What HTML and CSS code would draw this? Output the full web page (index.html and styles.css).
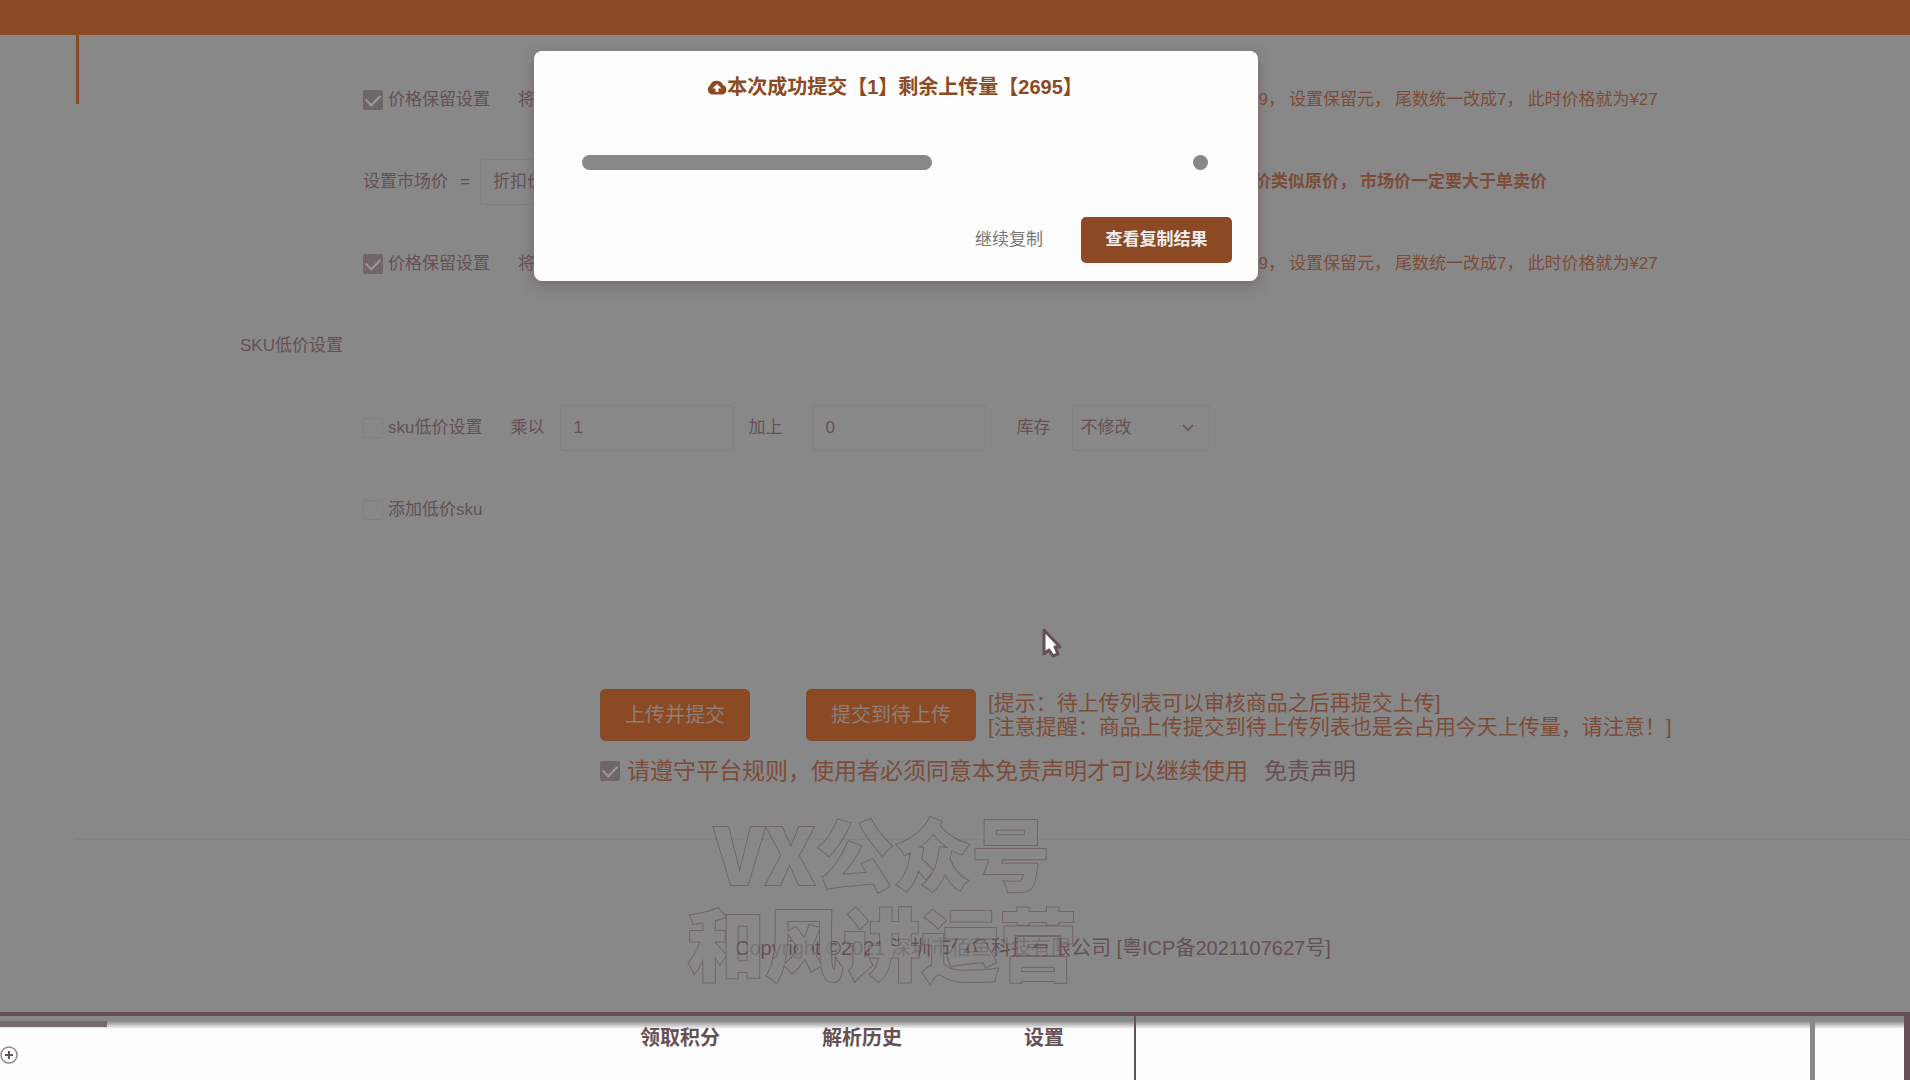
FILE: index.html
```html
<!DOCTYPE html>
<html lang="zh-CN">
<head>
<meta charset="utf-8">
<title>商品复制上传</title>
<link rel="stylesheet" href="styles.css">
</head>
<body>
<div class="page">
  <header class="topbar"></header>
  <main class="content">
    <form class="panel">
      <div class="row">
        <label class="check"><input type="checkbox" checked>价格保留设置</label>
        <span class="lead">将</span>
        <span class="hint hint-price"><span>59，</span><span>设置保留元，</span><span>尾数统一改成7，</span><span>此时价格就为¥27</span></span>
      </div>
      <div class="row">
        <label for="market">设置市场价</label>
        <span class="equals">=</span>
        <select id="market" class="field market"><option>折扣价</option></select>
        <span class="hint hint-market"><span>价类似原价，</span><span>市场价一定要大于单卖价</span></span>
      </div>
      <div class="row">
        <label class="check"><input type="checkbox" checked>价格保留设置</label>
        <span class="lead">将</span>
        <span class="hint hint-price"><span>59，</span><span>设置保留元，</span><span>尾数统一改成7，</span><span>此时价格就为¥27</span></span>
      </div>
      <div class="row row-title">SKU低价设置</div>
      <div class="row">
        <label class="check"><input type="checkbox">sku低价设置</label>
        <label class="tag" for="times">乘以</label>
        <input id="times" class="field" type="text" value="1">
        <label class="tag-near" for="plus">加上</label>
        <input id="plus" class="field" type="text" value="0">
        <label class="tag-stock" for="stock">库存</label>
        <span class="select-wrap">
          <select id="stock" class="field stock"><option>不修改</option></select>
          <svg class="chevron" viewBox="0 0 12 8"><path d="M1 1l5 5 5-5" fill="none" stroke="currentColor" stroke-width="1.6"/></svg>
        </span>
      </div>
      <div class="row">
        <label class="check"><input type="checkbox">添加低价sku</label>
      </div>
      <div class="actions">
        <button type="button" class="btn">上传并提交</button>
        <button type="button" class="btn">提交到待上传</button>
        <p class="tips">[提示：待上传列表可以审核商品之后再提交上传]<br>[注意提醒：商品上传提交到待上传列表也是会占用今天上传量，请注意！]</p>
      </div>
      <div class="agree">
        <label class="check"><input type="checkbox" checked>请遵守平台规则，使用者必须同意本免责声明才可以继续使用</label>
        <a href="#">免责声明</a>
      </div>
    </form>
    <footer class="footer">
      <p class="copyright">Copyright ©2021 深圳市佰鱼科技有限公司 [粤ICP备2021107627号]</p>
      <div class="watermark"><span>VX公众号</span><span>和风讲运营</span></div>
    </footer>
  </main>
  <nav class="dock">
    <div class="dock-main">
      <svg class="plus" viewBox="0 0 18 18"><circle cx="9" cy="9" r="8" fill="none" stroke="#888" stroke-width="1.4"/><path d="M9 5v8M5 9h8" stroke="#655054" stroke-width="2"/></svg>
      <a href="#">领取积分</a><a href="#">解析历史</a><a href="#">设置</a>
    </div>
    <div class="dock-mid"></div>
    <div class="dock-end"></div>
  </nav>
  <section class="modal" role="dialog" aria-labelledby="modal-title">
    <h2 id="modal-title"><svg class="cloud" viewBox="0 0 20 16"><path fill="currentColor" fill-rule="evenodd" d="M5 15.500A5 5 0 0 1 3 6.500 7 7 0 0 1 16 6a5 5 0 0 1 0 9.500ZM10 5L5.500 9.500H8.500V13H11.500V9.500H14.500Z"/></svg>本次成功提交【1】剩余上传量【2695】</h2>
    <div class="progress"><span class="bar"></span><span class="dot"></span></div>
    <div class="modal-actions">
      <button type="button" class="plain">继续复制</button>
      <button type="button" class="primary">查看复制结果</button>
    </div>
  </section>
  <svg class="cursor" viewBox="0 0 20 30"><path d="M2 2v24l5-4 4 6 5-2-3-7h5Z" fill="#fdfdfd" stroke="#655054" stroke-width="3" stroke-linejoin="round"/></svg>
</div>
</body>
</html>
```
FILE: styles.css
```css
:root {
  --grey: #888;
  --ink: #655054;
  --rust: #8c4a24;
  --hint: #7c4c38;
  --faint: #7c7879;
}
* { box-sizing: border-box; }
body {
  margin: 0;
  background: var(--grey);
  color: var(--ink);
  font: 17px/24px "Liberation Sans", "Noto Sans CJK SC", sans-serif;
}
h2, p { margin: 0; }
a { color: inherit; text-decoration: none; }
button, input, select { font: inherit; color: inherit; margin: 0; }
.page {
  position: relative;
  display: flex;
  flex-direction: column;
  min-height: 100vh;
  overflow: hidden;
}
.topbar { height: 35px; background: var(--rust); }
.content { flex: 1; padding-left: 76px; }
.panel {
  padding: 24px 0 56px 161px;
  border-left: 3px solid;
  border-image: linear-gradient(var(--rust) 70px, transparent 70px) 1;
}
.row {
  display: flex;
  align-items: center;
  height: 82px;
  padding-left: 123px;
  white-space: nowrap;
}
.row-title { padding-left: 0; }
.check { display: flex; align-items: center; gap: 5px; }
input[type="checkbox"] {
  appearance: none;
  display: grid;
  place-items: center;
  width: 20px;
  height: 20px;
  border: 1px dotted var(--faint);
  border-radius: 2px;
}
input[type="checkbox"]:checked { background: #70666a; border: 1px solid #70666a; }
input[type="checkbox"]:checked::before {
  content: "";
  width: 12px;
  height: 7px;
  margin-bottom: 3px;
  border: solid #999;
  border-width: 0 0 2px 2px;
  rotate: -45deg;
}
.lead { margin-left: 28px; }
.hint { display: flex; gap: 4px; color: var(--hint); }
.hint-price { margin-left: 714px; }
.hint-market { margin-left: 674px; font-weight: bold; }
.equals { margin: 0 10px 0 12px; }
.field {
  appearance: none;
  width: 174px;
  height: 46px;
  padding: 0 12px;
  border: 1px dotted var(--faint);
  border-radius: 4px;
  background: transparent;
}
.market { width: 100px; }
.tag { margin: 0 16px 0 28px; }
.tag-near { margin: 0 30px 0 14px; }
.tag-stock { margin: 0 22px 0 30px; }
.select-wrap { position: relative; }
.stock { width: 138px; padding: 0 7px; }
.chevron { position: absolute; right: 16px; top: 19px; width: 12px; height: 8px; }
.actions { display: flex; align-items: center; margin-top: 138px; padding-left: 360px; white-space: nowrap; }
.btn {
  height: 52px;
  padding: 0 24px;
  border: 1px solid #7c4c38;
  border-radius: 5px;
  background: var(--rust);
  color: #8b7f78;
  font-size: 20px;
}
.btn + .btn { margin-left: 56px; }
.tips { margin-left: 12px; color: var(--hint); font-size: 21px; }
.agree { display: flex; gap: 16px; margin-top: 18px; padding-left: 360px; font-size: 23px; white-space: nowrap; }
.agree .check { gap: 7px; color: var(--hint); }
.footer {
  position: relative;
  height: 170px;
  padding: 96px 0 0 659px;
  border-top: 1px dotted #807c7d;
}
.copyright { font-size: 20px; white-space: nowrap; }
.watermark {
  position: absolute;
  left: 611px;
  top: -34px;
  display: grid;
  justify-items: center;
  color: var(--grey);
  font: 900 78px/90px "Noto Sans CJK SC", sans-serif;
  -webkit-text-stroke: 2px var(--ink);
  paint-order: stroke fill;
  opacity: .6;
}
.dock {
  display: flex;
  height: 68px;
  border-top: 4px solid var(--ink);
  background: linear-gradient(var(--grey) 5px, #fdfdfd 13px);
  font-size: 20px;
  font-weight: bold;
}
.dock-main {
  position: relative;
  display: flex;
  width: 1136px;
  padding: 10px 0 0 640px;
  gap: 102px;
  border-right: 2px solid var(--ink);
}
.dock-main::before {
  content: "";
  position: absolute;
  left: 0;
  top: 5px;
  width: 107px;
  height: 6px;
  background: #766a6d;
}
.dock-main a:last-child { margin-left: 20px; }
.plus { position: absolute; left: 0; top: 30px; width: 18px; height: 18px; }
.dock-mid { flex: 1; border-right: 5px solid var(--grey); }
.dock-end { width: 95px; border-right: 6px solid var(--ink); }
.modal {
  position: absolute;
  left: 534px;
  top: 51px;
  width: 724px;
  padding: 24px 26px 18px 48px;
  border-radius: 8px;
  background: #fdfdfd;
  box-shadow: 0 4px 14px rgba(101, 80, 84, .5);
}
.modal h2 {
  display: flex;
  align-items: center;
  justify-content: center;
  color: var(--rust);
  font-size: 20px;
  line-height: 24px;
  padding-right: 24px;
}
.cloud { width: 20px; height: 16px; }
.progress { display: flex; justify-content: space-between; margin: 56px 24px 47px 0; }
.bar { width: 350px; height: 15px; border-radius: 8px; background: var(--grey); }
.dot { width: 15px; height: 15px; border-radius: 50%; background: var(--grey); }
.modal-actions { display: flex; justify-content: flex-end; gap: 20px; }
.plain, .primary { height: 46px; padding: 0 18px; border: 0; border-radius: 5px; }
.plain { background: none; color: #777; }
.primary { width: 151px; background: var(--rust); color: #eee; font-weight: bold; }
.cursor { position: absolute; left: 1042px; top: 628px; width: 20px; height: 30px; }
```
